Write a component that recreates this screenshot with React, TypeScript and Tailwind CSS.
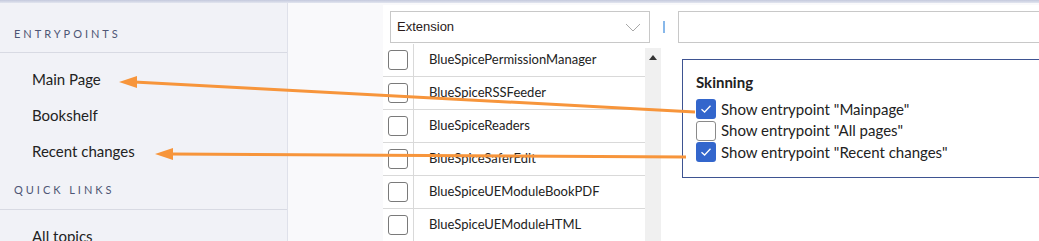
import React from "react";

const sidebarGroups = [
  {
    title: "ENTRYPOINTS",
    head: "h-[50px] pt-[14px]",
    items: ["Main Page", "Bookshelf", "Recent changes"],
  },
  { title: "QUICK LINKS", head: "h-[41px] pt-[3px]", items: ["All topics"] },
];

const extensions = [
  "BlueSpicePermissionManager",
  "BlueSpiceRSSFeeder",
  "BlueSpiceReaders",
  "BlueSpiceSaferEdit",
  "BlueSpiceUEModuleBookPDF",
  "BlueSpiceUEModuleHTML",
];

const options = [
  { label: 'Show entrypoint "Mainpage"', checked: true },
  { label: 'Show entrypoint "All pages"', checked: false },
  { label: 'Show entrypoint "Recent changes"', checked: true },
];

function Check({ checked }: { checked: boolean }) {
  if (!checked) {
    return <span className="w-[20px] h-[20px] rounded-[3px] border border-[#8a8a8a] bg-white shrink-0" />;
  }
  return (
    <span className="w-[20px] h-[20px] rounded-[3px] bg-[#3366cc] shrink-0 flex items-center justify-center">
      <svg width="12" height="10" viewBox="0 0 12 10" fill="none">
        <path d="M1.5 5.2 L4.6 8 L10.5 1.8" stroke="white" strokeWidth="1.3" />
      </svg>
    </span>
  );
}

export default function App() {
  return (
    <div className="relative w-[1039px] h-[241px] overflow-hidden flex flex-col bg-[#f9f9fb] font-['Lato',sans-serif]">
      {/* top shadow strip */}
      <div className="h-[3px] shrink-0 bg-gradient-to-b from-[#c4c9dd] to-[#e2e5ef]" />

      <div className="flex flex-1 min-h-0">
        {/* Sidebar */}
        <aside className="w-[288px] shrink-0 bg-[#f1f2f7] border-r border-[#dfe1ea]">
          {sidebarGroups.map((g) => (
            <div key={g.title}>
              <div className={`${g.head} pl-[14px] flex items-center text-[11px] tracking-[0.27em] text-[#4e5675] border-b border-[#d8dae3]`}>
                {g.title}
              </div>
              <ul className="pt-[8px]">
                {g.items.map((it) => (
                  <li key={it} className="h-[36px] pl-[32px] flex items-center text-[15px] text-[#222]">
                    {it}
                  </li>
                ))}
              </ul>
            </div>
          ))}
        </aside>

        {/* Main */}
        <main className="flex-1 pl-[95px] pt-[2px]">
          <div className="h-full bg-white pt-[6px] flex flex-col">
            <div className="flex items-center">
              <div className="ml-[7px] w-[260px] h-[32px] border border-[#c8c8c8] flex items-center justify-between pl-[6px] pr-[8px] text-[13px] text-[#2a1a1a] font-['Liberation_Sans',sans-serif]">
                <span>Extension</span>
                <svg width="16" height="9" viewBox="0 0 16 9" fill="none">
                  <path d="M1 1 L8 8 L15 1" stroke="#a8a8a8" strokeWidth="1" />
                </svg>
              </div>
              <span className="ml-[13px] w-[2px] h-[12px] bg-[#88b8ea]" />
              <div className="ml-[13px] flex-1 h-[32px] border border-[#c8c8c8] border-r-0" />
            </div>

            <div className="flex flex-1 mt-px">
              <div className="w-[262px] shrink-0">
                {extensions.map((e) => (
                  <div key={e} className="flex h-[33px] border-b border-[#d9d9d9]">
                    <div className="w-[31px] border-r border-[#d9d9d9] pl-[5px] pt-[6px]">
                      <span className="block w-[20px] h-[20px] rounded-[3px] border border-[#7a7a7a]" />
                    </div>
                    <div className="pl-[15px] flex items-center text-[13px] text-[#222]">{e}</div>
                  </div>
                ))}
              </div>
              <div className="w-[16px] mt-[4px] bg-[#f0f0f0] flex justify-center pt-[7px]">
                <span className="w-0 h-0 border-l-[4px] border-r-[4px] border-b-[5px] border-l-transparent border-r-transparent border-b-[#333]" />
              </div>

              <section className="ml-[21px] mt-[15px] self-start flex-1 h-[119px] border-[1.5px] border-r-0 border-[#3e5391] pl-[13px] pt-[12px]">
                <h3 className="text-[15px] font-bold text-[#222] leading-[20px]">Skinning</h3>
                <div className="mt-[7px] flex flex-col gap-[1.5px]">
                  {options.map((o) => (
                    <label key={o.label} className="flex items-center gap-[5px] h-[20px] text-[15px] text-[#222]">
                      <Check checked={o.checked} />
                      {o.label}
                    </label>
                  ))}
                </div>
              </section>
            </div>
          </div>
        </main>
      </div>

      {/* annotation arrows */}
      <svg className="absolute inset-0 pointer-events-none" width="1039" height="241">
        <line x1="134" y1="82" x2="695" y2="112" stroke="#f7953b" strokeWidth="3" />
        <polygon points="119,82 137,76 137,88" fill="#f7953b" />
        <line x1="170" y1="154" x2="686" y2="157" stroke="#f7953b" strokeWidth="3" />
        <polygon points="155,154 173,148 173,160" fill="#f7953b" />
      </svg>
    </div>
  );
}
